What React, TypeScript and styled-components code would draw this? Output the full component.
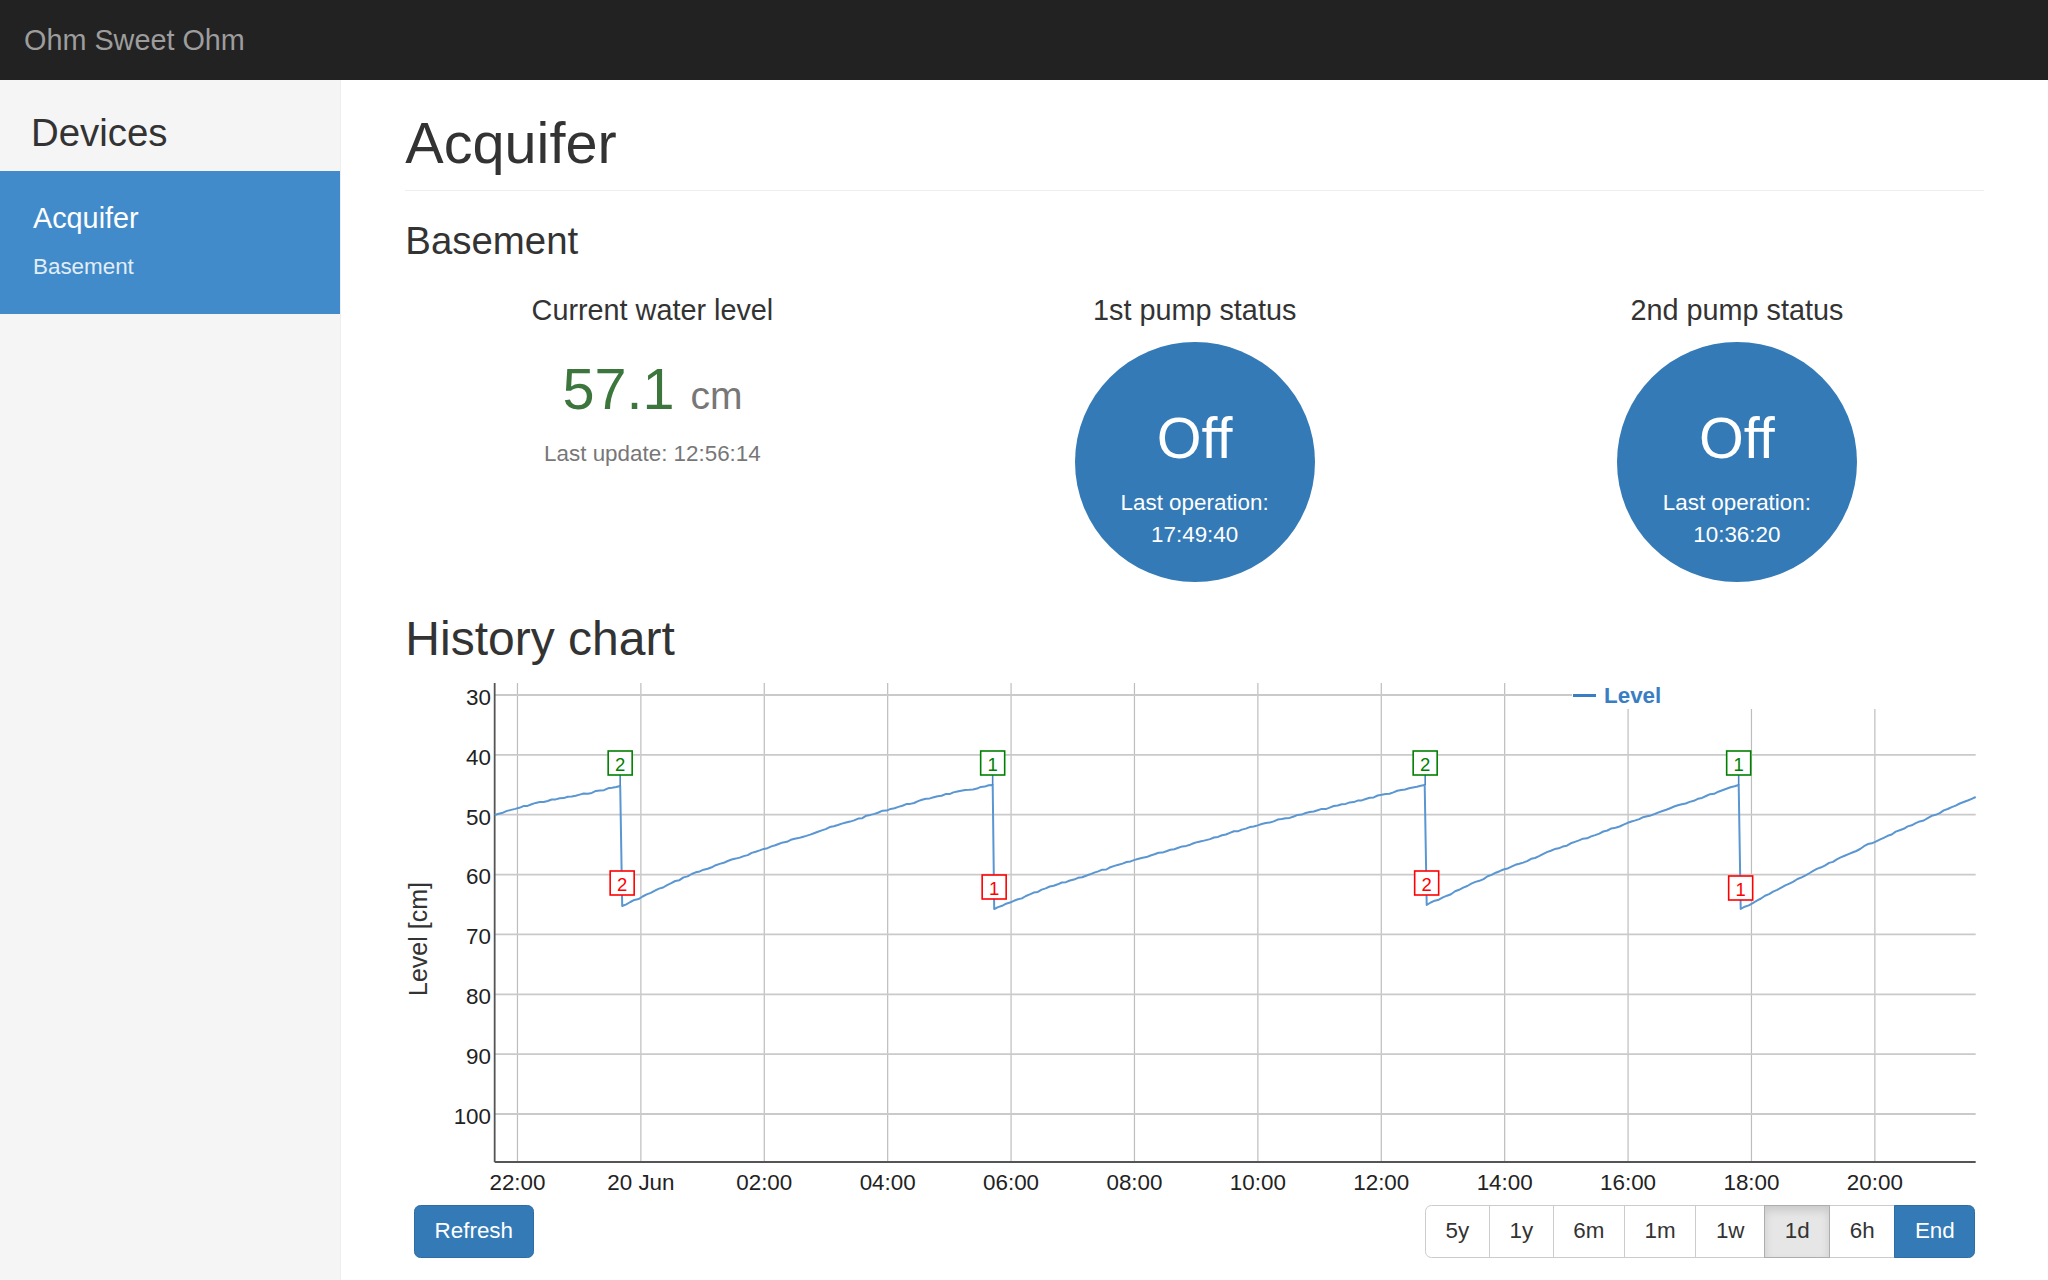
import React from 'react';
import styled, { createGlobalStyle } from 'styled-components';

const GlobalStyle = createGlobalStyle`
  html, body { margin: 0; padding: 0; }
  body {
    font-family: "Liberation Sans", Arial, Helvetica, sans-serif;
    font-size: 22.4px;
    line-height: 1.42857;
    color: #333;
    background: #fff;
  }
  *, *::before, *::after { box-sizing: border-box; }
`;

const Page = styled.div`
  min-height: 100vh;
  height: 100vh;
  display: flex;
  flex-direction: column;
  overflow: hidden;
`;

const Navbar = styled.header`
  height: 80px;
  flex-shrink: 0;
  background: #222;
  display: flex;
  align-items: flex-start;
`;

const Brand = styled.div`
  padding: 24px;
  font-size: 28.8px;
  line-height: 32px;
  color: #9d9d9d;
`;

const Body = styled.div`
  flex: 1;
  display: flex;
  min-height: 0;
`;

const Sidebar = styled.aside`
  width: 341.33px;
  flex-shrink: 0;
  background: #f5f5f5;
  border-right: 1px solid #eee;
  padding-top: 31.6px;
`;

const SidebarTitle = styled.h3`
  margin: 0 0 16.7px;
  padding-left: 31px;
  font-size: 38.4px;
  line-height: 1.1;
  font-weight: normal;
  color: #333;
`;

const DeviceItem = styled.a<{ $active?: boolean }>`
  display: block;
  padding: 15.7px 32px 15px;
  background: ${p => (p.$active ? '#428bca' : 'transparent')};
  border: 1px solid ${p => (p.$active ? '#428bca' : '#ddd')};
  color: ${p => (p.$active ? '#fff' : '#555')};
  text-decoration: none;
`;

const DeviceName = styled.h4`
  margin: 16px 0 16.3px;
  font-size: 28.8px;
  line-height: 1.1;
  font-weight: normal;
`;

const DeviceLocation = styled.p`
  margin: 0 0 15px;
  font-size: 22.4px;
  line-height: 32px;
  color: #e1edf7;
`;

const Main = styled.main`
  flex: 1;
  min-width: 0;
  padding: 32px 64px 0 64px;
`;

const PageHeader = styled.h1`
  margin: 0 0 28.8px;
  padding-bottom: 14.4px;
  border-bottom: 1px solid #eee;
  font-size: 57.6px;
  line-height: 1.1;
  font-weight: normal;
  color: #333;
`;

const SectionTitle = styled.h3`
  margin: 0 0 33px;
  font-size: 38.4px;
  line-height: 1.1;
  font-weight: normal;
`;

const StatusRow = styled.div`
  display: grid;
  grid-template-columns: repeat(3, 1fr);
  margin: 0 -24px;
`;

const StatusCol = styled.div`
  padding: 0 24px;
  display: flex;
  flex-direction: column;
  align-items: center;
  text-align: center;
`;

const ColTitle = styled.h4`
  margin: 0 0 16px;
  font-size: 28.8px;
  line-height: 1.1;
  font-weight: normal;
`;

const Reading = styled.div`
  margin: 15.8px 0 16px;
  font-size: 57.6px;
  line-height: 1.1;
  color: #3c763d;
  white-space: nowrap;
`;

const Unit = styled.span`
  font-size: 39px;
  color: #777;
`;

const Muted = styled.p`
  margin: 0;
  color: #777;
  line-height: 32px;
`;

const PumpCircle = styled.div`
  width: 240px;
  height: 240px;
  border-radius: 50%;
  background: #337ab7;
  color: #fff;
  display: flex;
  flex-direction: column;
  align-items: center;
  padding-top: 64.4px;
`;

const PumpState = styled.div`
  font-size: 57.6px;
  line-height: 1.1;
  margin-bottom: 17px;
`;

const PumpLine = styled.div`
  line-height: 32px;
`;

const ChartTitle = styled.h2`
  margin: 30.4px 0 17.2px;
  font-size: 48px;
  line-height: 1.1;
  font-weight: normal;
`;

const ChartBox = styled.div`
  position: relative;
  height: 514px;
`;

const ChartSvg = styled.svg`
  display: block;
  width: 100%;
  height: 514px;
  font-family: "Liberation Sans", Arial, Helvetica, sans-serif;
`;

const Legend = styled.div`
  position: absolute;
  top: 0;
  right: 8px;
  width: 404px;
  height: 26px;
  background: #fff;
  display: flex;
  align-items: center;
  gap: 8px;
  padding-left: 1px;
  font-size: 22.4px;
  line-height: 26px;
  font-weight: bold;
  color: #3a7dc3;
`;

const LegendLine = styled.span`
  display: inline-block;
  width: 23px;
  border-bottom: 3px solid #3a7dc3;
`;

const ButtonRow = styled.div`
  display: flex;
  justify-content: space-between;
  align-items: center;
  margin-top: 8px;
  padding: 0 8.7px;
`;

const Btn = styled.button<{ $primary?: boolean; $active?: boolean }>`
  font-family: inherit;
  font-size: 22.4px;
  line-height: 32px;
  padding: 9.6px 19.6px;
  border: 1px solid ${p => (p.$primary ? '#2e6da4' : p.$active ? '#adadad' : '#ccc')};
  background: ${p => (p.$primary ? '#337ab7' : p.$active ? '#e6e6e6' : '#fff')};
  color: ${p => (p.$primary ? '#fff' : '#333')};
  border-radius: 6.4px;
  box-shadow: ${p => (p.$active ? 'inset 0 4.8px 8px rgba(0,0,0,.125)' : 'none')};
  white-space: nowrap;
  cursor: pointer;
  position: relative;
  z-index: ${p => (p.$primary || p.$active ? 2 : 1)};
`;

const BtnGroup = styled.div`
  display: inline-flex;
  & > ${Btn} { border-radius: 0; margin-left: -1px; }
  & > ${Btn}:first-child { border-radius: 6.4px 0 0 6.4px; margin-left: 0; }
  & > ${Btn}:last-child { border-radius: 0 6.4px 6.4px 0; }
`;

/* ---------- chart data (pixel coordinates of the page, shifted to the chart box) ---------- */
const OX = 405.33;
const OY = 683;
const PL = 495 - OX;
const PR = 1976 - OX;
const PB = 1162 - OY;
const yOf = (v: number) => 12 + (v - 30) * 5.986;

const yTicks = [30, 40, 50, 60, 70, 80, 90, 100];
const xTicks = ['22:00', '20 Jun', '02:00', '04:00', '06:00', '08:00', '10:00', '12:00', '14:00', '16:00', '18:00', '20:00'];
const xTickPos = (k: number) => 517.8 + k * 123.4 - OX;

const segments: [number, number][][] = [
  [[495, 815], [536, 803], [580, 795], [620.5, 786]],
  [[622.5, 906], [692, 874], [764, 849], [826, 829], [887, 810], [938, 796], [993, 785]],
  [[994.5, 909], [1050, 887], [1135, 860], [1258, 825], [1382, 795], [1425, 785]],
  [[1427, 905], [1496, 873], [1559, 848], [1628, 823], [1686, 803], [1739, 785]],
  [[1741, 909], [1810, 873], [1876, 841], [1976, 797]],
];

function buildSeries(): string {
  let seed = 7;
  const rnd = () => {
    seed = (seed * 9301 + 49297) % 233280;
    return seed / 233280 - 0.5;
  };
  const pts: string[] = [];
  segments.forEach(seg => {
    for (let i = 0; i < seg.length - 1; i++) {
      const [x0, y0] = seg[i];
      const [x1, y1] = seg[i + 1];
      const n = Math.max(1, Math.round((x1 - x0) / 4));
      for (let j = 0; j < n; j++) {
        const t = j / n;
        const jitter = i === 0 && j === 0 ? 0 : rnd() * 1.3;
        const x = x0 + (x1 - x0) * t;
        const y = y0 + (y1 - y0) * t + jitter;
        pts.push(`${(x - OX).toFixed(1)} ${(y - OY).toFixed(1)}`);
      }
    }
    const [lx, ly] = seg[seg.length - 1];
    pts.push(`${(lx - OX).toFixed(1)} ${(ly - OY).toFixed(1)}`);
  });
  return 'M' + pts.join(' L');
}

const seriesPath = buildSeries();

type Note = { x: number; top: number; label: string; color: string; tickTo?: number };
const notes: Note[] = [
  { x: 620.5, top: 751, label: '2', color: '#008000', tickTo: 786 },
  { x: 622.5, top: 871, label: '2', color: '#ff0000' },
  { x: 993, top: 751, label: '1', color: '#008000', tickTo: 785 },
  { x: 994.5, top: 875, label: '1', color: '#ff0000' },
  { x: 1425.5, top: 751, label: '2', color: '#008000', tickTo: 785 },
  { x: 1427, top: 871, label: '2', color: '#ff0000' },
  { x: 1739, top: 751, label: '1', color: '#008000', tickTo: 785 },
  { x: 1741, top: 876, label: '1', color: '#ff0000' },
];

const HistoryChart: React.FC = () => (
  <ChartBox>
    <ChartSvg>
      {xTicks.map((_, k) => (
        <line key={`vx${k}`} x1={xTickPos(k)} x2={xTickPos(k)} y1={0} y2={PB} stroke="#bdbdbd" strokeWidth={1.2} />
      ))}
      {yTicks.map(v => (
        <line key={`hy${v}`} x1={PL} x2={PR} y1={yOf(v)} y2={yOf(v)} stroke="#cacaca" strokeWidth={1.8} />
      ))}
      <line x1={PL} x2={PL} y1={0} y2={PB} stroke="#555" strokeWidth={1.8} />
      <line x1={PL} x2={PR} y1={PB} y2={PB} stroke="#555" strokeWidth={1.8} />
      {yTicks.map(v => (
        <text key={`ty${v}`} x={86} y={yOf(v) + 9.8} textAnchor="end" fontSize={22.4} fill="#222">
          {v}
        </text>
      ))}
      {xTicks.map((t, k) => (
        <text key={`tx${k}`} x={xTickPos(k)} y={506.5} textAnchor="middle" fontSize={22.4} fill="#222">
          {t}
        </text>
      ))}
      <text x={22} y={256} transform="rotate(-90 22 256)" textAnchor="middle" fontSize={25} fill="#333">
        Level [cm]
      </text>
      <path d={seriesPath} fill="none" stroke="#5a96d2" strokeWidth={2} strokeLinejoin="round" />
      {notes.map((n, i) => (
        <g key={`n${i}`}>
          {n.tickTo !== undefined && (
            <line x1={n.x - OX} x2={n.x - OX} y1={n.top + 24 - OY} y2={n.tickTo - OY} stroke="#4a86c5" strokeWidth={1.6} />
          )}
          <rect x={n.x - 12 - OX} y={n.top - OY} width={24} height={24} fill="#fff" stroke={n.color} strokeWidth={1.6} />
          <text x={n.x - OX} y={n.top + 20 - OY} textAnchor="middle" fontSize={18.5} fill={n.color}>
            {n.label}
          </text>
        </g>
      ))}
    </ChartSvg>
    <Legend>
      <LegendLine />
      <span>Level</span>
    </Legend>
  </ChartBox>
);

const ranges = ['5y', '1y', '6m', '1m', '1w', '1d', '6h'];

export default function App() {
  return (
    <>
      <GlobalStyle />
      <Page>
        <Navbar>
          <Brand>Ohm Sweet Ohm</Brand>
        </Navbar>
        <Body>
          <Sidebar>
            <SidebarTitle>Devices</SidebarTitle>
            <DeviceItem $active href="#">
              <DeviceName>Acquifer</DeviceName>
              <DeviceLocation>Basement</DeviceLocation>
            </DeviceItem>
          </Sidebar>
          <Main>
            <PageHeader>Acquifer</PageHeader>
            <SectionTitle>Basement</SectionTitle>
            <StatusRow>
              <StatusCol>
                <ColTitle>Current water level</ColTitle>
                <Reading>
                  57.1 <Unit>cm</Unit>
                </Reading>
                <Muted>Last update: 12:56:14</Muted>
              </StatusCol>
              <StatusCol>
                <ColTitle>1st pump status</ColTitle>
                <PumpCircle>
                  <PumpState>Off</PumpState>
                  <PumpLine>Last operation:</PumpLine>
                  <PumpLine>17:49:40</PumpLine>
                </PumpCircle>
              </StatusCol>
              <StatusCol>
                <ColTitle>2nd pump status</ColTitle>
                <PumpCircle>
                  <PumpState>Off</PumpState>
                  <PumpLine>Last operation:</PumpLine>
                  <PumpLine>10:36:20</PumpLine>
                </PumpCircle>
              </StatusCol>
            </StatusRow>
            <ChartTitle>History chart</ChartTitle>
            <HistoryChart />
            <ButtonRow>
              <Btn $primary>Refresh</Btn>
              <BtnGroup>
                {ranges.map(r => (
                  <Btn key={r} $active={r === '1d'}>
                    {r}
                  </Btn>
                ))}
                <Btn $primary>End</Btn>
              </BtnGroup>
            </ButtonRow>
          </Main>
        </Body>
      </Page>
    </>
  );
}
